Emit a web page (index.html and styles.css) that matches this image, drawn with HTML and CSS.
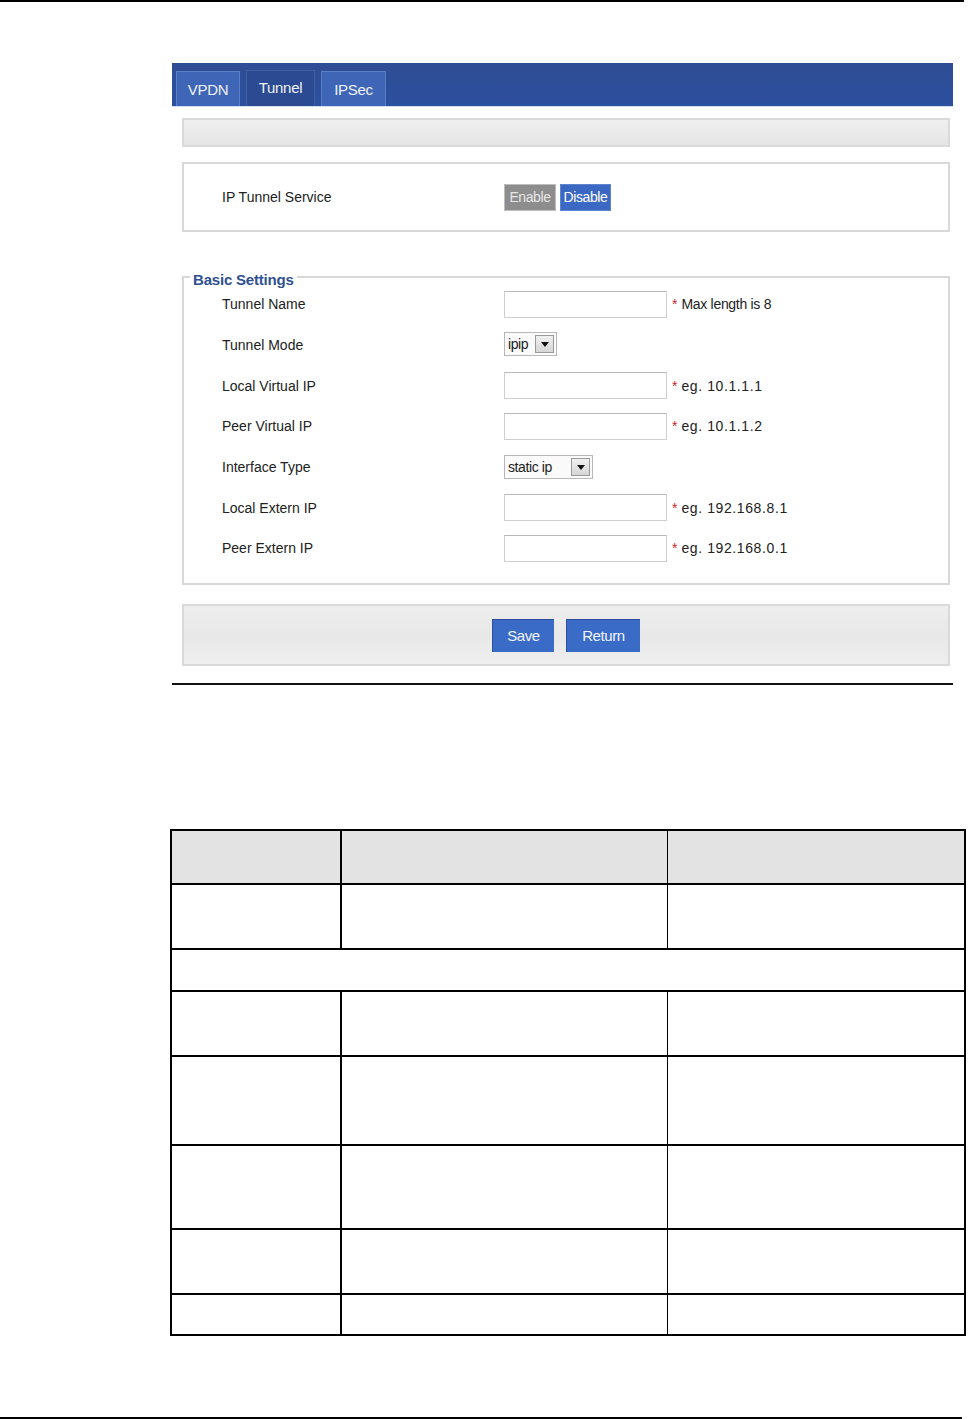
FILE: index.html
```html
<!DOCTYPE html>
<html>
<head>
<meta charset="utf-8">
<link rel="stylesheet" href="styles.css">
</head>
<body>
<div class="page">
  <div class="top-rule"></div>

  <div class="panel">
    <div class="panel-head">
      <div class="tab">VPDN</div>
      <div class="tab active">Tunnel</div>
      <div class="tab">IPSec</div>
    </div>
    <div class="panel-body">
      <div class="grey-bar"></div>

      <div class="service-box">
        <div class="label">IP Tunnel Service</div>
        <div class="toggle">
          <span class="tbtn off">Enable</span>
          <span class="tbtn on">Disable</span>
        </div>
      </div>

      <div class="fieldset">
        <div class="legend">Basic Settings</div>
        <div class="frow">
          <div class="label">Tunnel Name</div>
          <div class="value"><span class="input"></span><span class="req">*</span><span class="hint">Max length is 8</span></div>
        </div>
        <div class="frow">
          <div class="label">Tunnel Mode</div>
          <div class="value"><span class="select sel-ipip"><span class="sel-text">ipip</span><span class="sel-btn"><svg width="8" height="5" viewBox="0 0 8 5"><path d="M0 0H8L4 5Z" fill="#111"/></svg></span></span></div>
        </div>
        <div class="frow">
          <div class="label">Local Virtual IP</div>
          <div class="value"><span class="input"></span><span class="req">*</span><span class="hint ip">eg. 10.1.1.1</span></div>
        </div>
        <div class="frow">
          <div class="label">Peer Virtual IP</div>
          <div class="value"><span class="input"></span><span class="req">*</span><span class="hint ip">eg. 10.1.1.2</span></div>
        </div>
        <div class="frow">
          <div class="label">Interface Type</div>
          <div class="value"><span class="select sel-static"><span class="sel-text">static ip</span><span class="sel-btn"><svg width="8" height="5" viewBox="0 0 8 5"><path d="M0 0H8L4 5Z" fill="#111"/></svg></span></span></div>
        </div>
        <div class="frow">
          <div class="label">Local Extern IP</div>
          <div class="value"><span class="input"></span><span class="req">*</span><span class="hint ip">eg. 192.168.8.1</span></div>
        </div>
        <div class="frow">
          <div class="label">Peer Extern IP</div>
          <div class="value"><span class="input"></span><span class="req">*</span><span class="hint ip">eg. 192.168.0.1</span></div>
        </div>
      </div>

      <div class="save-bar">
        <span class="btn save">Save</span>
        <span class="btn ret">Return</span>
      </div>
    </div>
    <div class="panel-rule"></div>
  </div>

  <table class="params">
    <tr class="r1"><th></th><th></th><th></th></tr>
    <tr class="r2"><td></td><td></td><td></td></tr>
    <tr class="r3"><td colspan="3"></td></tr>
    <tr class="r4"><td></td><td></td><td></td></tr>
    <tr class="r5"><td></td><td></td><td></td></tr>
    <tr class="r6"><td></td><td></td><td></td></tr>
    <tr class="r7"><td></td><td></td><td></td></tr>
    <tr class="r8"><td></td><td></td><td></td></tr>
  </table>

  <div class="bottom-rule"></div>
</div>
</body>
</html>
```

FILE: styles.css
```css
* { box-sizing: border-box; }
html, body { margin: 0; padding: 0; background: #fff; }
body {
  font-family: "Liberation Sans", Arial, sans-serif;
  font-size: 14px;
  color: #222;
  width: 970px;
  height: 1419px;
  overflow: hidden;
}
.page { display: flex; flex-direction: column; }

.top-rule { width: 964px; height: 2px; background: #000; }

.panel { margin: 61px 0 0 172px; width: 781px; }

.panel-head {
  height: 44px;
  background: linear-gradient(#2f4d94, #2c4f9f);
  border-bottom: 1px solid #cfe0f2;
  display: flex;
  align-items: flex-end;
  gap: 6px;
  padding-left: 4px;
}
.tab {
  height: 35px;
  display: flex;
  align-items: center;
  justify-content: center;
  color: #eef3fb;
  font-size: 15px;
  letter-spacing: -0.3px;
  background: #3f66b6;
  border: 1px solid #5a7fc6;
  border-bottom: none;
}
.tab:nth-child(1) { width: 64px; }
.tab:nth-child(2) { width: 69px; height: 36px; padding-bottom: 3px; }
.tab:nth-child(3) { width: 65px; }
.tab.active { background: #2b4a91; border-color: #41609f; }

.panel-body { padding: 0 3px 0 10px; display: flex; flex-direction: column; }

.grey-bar {
  margin-top: 11px;
  height: 29px;
  background: linear-gradient(#f0f0f0, #e4e4e4);
  border: 2px solid #dadada;
}

.service-box {
  margin-top: 15px;
  height: 70px;
  border: 2px solid #d8d8d8;
  display: flex;
  align-items: center;
  padding-left: 38px;
}
.service-box .label { width: 282px; }
.toggle { display: flex; gap: 4px; }
.tbtn {
  height: 27px;
  display: flex;
  align-items: center;
  justify-content: center;
  font-size: 14px;
  letter-spacing: -0.4px;
}
.tbtn.off { width: 52px; background: #8d8d8d; color: #e6e6e6; border: 1px solid #bdbdbd; }
.tbtn.on { width: 51px; background: #3b68c3; color: #fff; border: 1px solid #5c84cf; }

.fieldset {
  position: relative;
  margin-top: 44px;
  height: 309px;
  border: 2px solid #d8d8d8;
  padding: 6px 0 0 38px;
}
.legend {
  position: absolute;
  left: 6px;
  top: -7px;
  padding: 0 3px;
  background: #fff;
  color: #2f5191;
  font-weight: bold;
  font-size: 15px;
  letter-spacing: -0.2px;
  line-height: 17px;
}

.frow { height: 40.67px; display: flex; align-items: center; }
.frow .label { width: 282px; }
.value { display: flex; align-items: center; }
.input {
  width: 163px;
  height: 27px;
  border: 1px solid #cfcfcf;
  border-top-color: #b9b9b9;
  background: #fff;
}
.req { color: #c8282d; margin-left: 5px; font-size: 14px; }
.hint { margin-left: 4px; letter-spacing: -0.3px; }
.hint.ip { letter-spacing: 0.6px; }

.select {
  height: 24px;
  display: flex;
  align-items: center;
  justify-content: space-between;
  border: 1px solid #b8b8b8;
  background: #fafafa;
  padding: 0 2px 0 3px;
}
.sel-ipip { width: 53px; margin-top: -2px; }
.sel-static { width: 89px; }
.sel-text { letter-spacing: -0.4px; }
.sel-btn {
  width: 19px;
  height: 18px;
  border: 1px solid #9a9a9a;
  background: linear-gradient(#f0f0f0, #d6d6d6);
  display: flex;
  align-items: center;
  justify-content: center;
  padding-top: 2px;
}

.save-bar {
  margin-top: 19px;
  height: 62px;
  border: 2px solid #dadada;
  background: linear-gradient(#eeeeee, #e8e8e8 50%, #eeeeee);
  display: flex;
  align-items: center;
  justify-content: center;
  gap: 12px;
}
.btn {
  height: 33px;
  display: flex;
  align-items: center;
  justify-content: center;
  background: #3a6bc7;
  color: #f2f6fc;
  font-size: 15px;
  letter-spacing: -0.4px;
  border-top: 1px solid #2c4f9a;
  border-left: 1px solid #2c4f9a;
}
.btn.save { width: 62px; }
.btn.ret { width: 74px; }

.panel-rule { margin-top: 17px; height: 2px; background: #111; }

.params {
  margin: 144px 0 0 170px;
  width: 796px;
  border-collapse: collapse;
  table-layout: fixed;
  border: 2px solid #000;
}
.params th, .params td { border: 2px solid #000; padding: 0; }
.params th:nth-child(1), .params td:nth-child(1) { width: 170px; }
.params th:nth-child(2), .params td:nth-child(2) { width: 326px; border-right-width: 1px; }
.params th:nth-child(3), .params td:nth-child(3) { border-left-width: 1px; }
.params th { background: #e3e3e3; }
.r1 { height: 54px; }
.r2 { height: 65px; }
.r3 { height: 42px; }
.r4 { height: 65px; }
.r5 { height: 89px; }
.r6 { height: 84px; }
.r7 { height: 65px; }
.r8 { height: 41px; }

.bottom-rule { margin-top: 81px; width: 962px; height: 2px; background: #000; }
```
